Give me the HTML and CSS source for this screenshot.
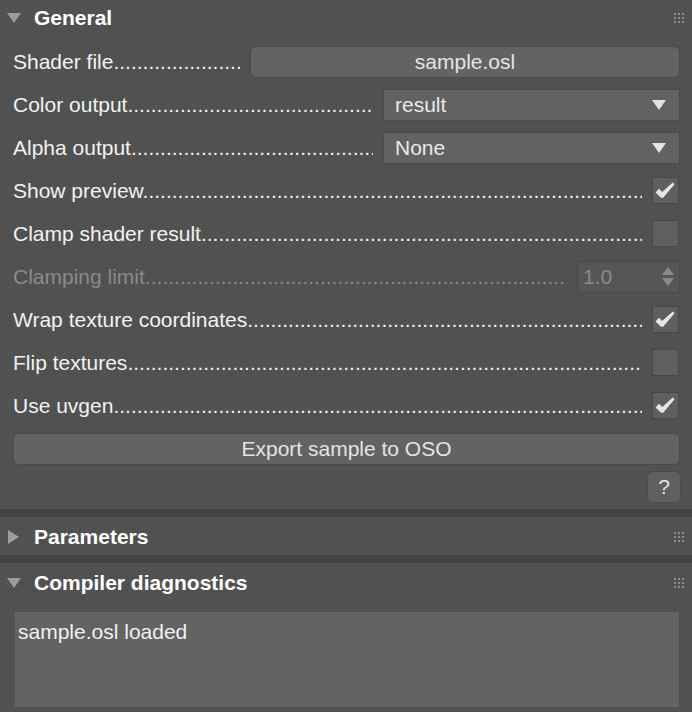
FILE: index.html
```html
<!DOCTYPE html>
<html>
<head>
<meta charset="utf-8">
<link rel="stylesheet" href="styles.css">
</head>
<body>
<div class="panel">
  <section class="rollout">
    <div class="head head-first">
      <span class="twisty"><span class="tri-down"></span></span>
      <span class="title">General</span>
      <span class="grip"><i></i><i></i><i></i><i></i><i></i><i></i><i></i><i></i><i></i></span>
    </div>
    <div class="body">
      <div class="row">
        <span class="label">Shader file</span>
        <button class="btn file-btn">sample.osl</button>
      </div>
      <div class="row">
        <span class="label">Color output</span>
        <div class="dropdown"><span>result</span><span class="arrow"></span></div>
      </div>
      <div class="row">
        <span class="label">Alpha output</span>
        <div class="dropdown"><span>None</span><span class="arrow"></span></div>
      </div>
      <div class="row">
        <span class="label">Show preview</span>
        <span class="check on"><svg viewBox="0 0 27 27" width="27" height="27"><polygon points="3.5,15.5 7,11.8 10.2,15 20.8,5.5 22.5,7.2 11.2,20.8 9,20.8"/></svg></span>
      </div>
      <div class="row">
        <span class="label">Clamp shader result</span>
        <span class="check"></span>
      </div>
      <div class="row disabled">
        <span class="label">Clamping limit</span>
        <div class="spinner"><span>1.0</span><span class="spin"><span class="up"></span><span class="down"></span></span></div>
      </div>
      <div class="row">
        <span class="label">Wrap texture coordinates</span>
        <span class="check on"><svg viewBox="0 0 27 27" width="27" height="27"><polygon points="3.5,15.5 7,11.8 10.2,15 20.8,5.5 22.5,7.2 11.2,20.8 9,20.8"/></svg></span>
      </div>
      <div class="row">
        <span class="label">Flip textures</span>
        <span class="check"></span>
      </div>
      <div class="row">
        <span class="label">Use uvgen</span>
        <span class="check on"><svg viewBox="0 0 27 27" width="27" height="27"><polygon points="3.5,15.5 7,11.8 10.2,15 20.8,5.5 22.5,7.2 11.2,20.8 9,20.8"/></svg></span>
      </div>
      <button class="btn export-btn">Export sample to OSO</button>
      <div class="help-row"><button class="btn help-btn">?</button></div>
    </div>
  </section>
  <div class="sep"></div>
  <section class="rollout">
    <div class="head">
      <span class="twisty"><span class="tri-right"></span></span>
      <span class="title">Parameters</span>
      <span class="grip"><i></i><i></i><i></i><i></i><i></i><i></i><i></i><i></i><i></i></span>
    </div>
  </section>
  <div class="sep"></div>
  <section class="rollout">
    <div class="head">
      <span class="twisty"><span class="tri-down"></span></span>
      <span class="title">Compiler diagnostics</span>
      <span class="grip"><i></i><i></i><i></i><i></i><i></i><i></i><i></i><i></i><i></i></span>
    </div>
    <div class="diag-body">
      <div class="log">sample.osl loaded</div>
    </div>
  </section>
</div>
</body>
</html>
```

FILE: styles.css
```css
html, body {
  margin: 0;
  padding: 0;
  background: #515151;
}
body {
  font-family: "Liberation Sans", Arial, sans-serif;
  font-size: 21px;
  color: #f2f2f2;
  overflow: hidden;
}
.panel {
  width: 692px;
}
.head {
  display: flex;
  align-items: center;
  height: 38px;
  padding-top: 2px;
  box-sizing: border-box;
}
.head-first {
  height: 36px;
  padding-top: 0;
}
.twisty {
  width: 34px;
  flex: none;
  display: flex;
  align-items: center;
}
.tri-down {
  margin-left: 7px;
  width: 0;
  height: 0;
  border-left: 7px solid transparent;
  border-right: 7px solid transparent;
  border-top: 10px solid #9c9c9c;
}
.tri-right {
  margin-left: 8px;
  width: 0;
  height: 0;
  border-top: 7px solid transparent;
  border-bottom: 7px solid transparent;
  border-left: 11px solid #9c9c9c;
}
.title {
  flex: 1;
  font-weight: bold;
  color: #ffffff;
  font-size: 21px;
}
.grip {
  display: grid;
  grid-template-columns: repeat(3, 2px);
  grid-auto-rows: 2px;
  gap: 2px;
  margin-right: 8px;
}
.grip i {
  display: block;
  background: #8e8e8e;
}
.body {
  padding: 4px 12px 6px 13px;
}
.row {
  display: flex;
  align-items: center;
  height: 43px;
}
.label {
  flex: 1;
  min-width: 0;
  overflow: hidden;
  white-space: nowrap;
  margin-right: 10px;
}
.label::after {
  content: "........................................................................................................................................";
}
.disabled .label {
  color: #8a8a8a;
}
.btn {
  font-family: inherit;
  font-size: 21px;
  color: #e4e4e4;
  background: #636363;
  border: 1px solid #4a4a4a;
  border-radius: 6px;
  padding: 0;
  box-sizing: border-box;
}
.file-btn {
  width: 430px;
  height: 32px;
}
.dropdown {
  width: 297px;
  height: 32px;
  box-sizing: border-box;
  background: #626262;
  border: 1px solid #4b4b4b;
  display: flex;
  align-items: center;
  justify-content: space-between;
  padding: 0 13px 0 11px;
  color: #e8e8e8;
}
.arrow {
  width: 0;
  height: 0;
  border-left: 7px solid transparent;
  border-right: 7px solid transparent;
  border-top: 10px solid #e2e2e2;
}
.check {
  width: 27px;
  height: 27px;
  box-sizing: border-box;
  background: #5f5f5f;
  border: 1px solid #474747;
  margin-right: 1px;
  display: block;
}
.check svg {
  display: block;
  margin: -1px;
}
.check polygon {
  fill: #e6e6e6;
}
.spinner {
  width: 103px;
  height: 32px;
  box-sizing: border-box;
  background: #565656;
  border: 1px solid #4a4a4a;
  display: flex;
  align-items: center;
  justify-content: space-between;
  padding: 0 5px 0 5px;
  color: #8a8a8a;
}
.spin {
  display: flex;
  flex-direction: column;
  gap: 3px;
}
.spin .up {
  width: 0;
  height: 0;
  border-left: 6px solid transparent;
  border-right: 6px solid transparent;
  border-bottom: 8px solid #8a8a8a;
}
.spin .down {
  width: 0;
  height: 0;
  border-left: 6px solid transparent;
  border-right: 6px solid transparent;
  border-top: 8px solid #8a8a8a;
}
.export-btn {
  display: block;
  width: 100%;
  height: 32px;
  margin-top: 6px;
}
.help-row {
  display: flex;
  justify-content: flex-end;
  margin-top: 6px;
}
.help-btn {
  width: 34px;
  height: 32px;
  background: #606060;
  margin-right: -1px;
}
.sep {
  height: 8px;
  background: #444444;
}
.diag-body {
  padding: 11px 13px 6px 15px;
}
.log {
  height: 95px;
  background: #636363;
  padding: 8px 0 0 3px;
  box-sizing: border-box;
  color: #f0f0f0;
}
```
